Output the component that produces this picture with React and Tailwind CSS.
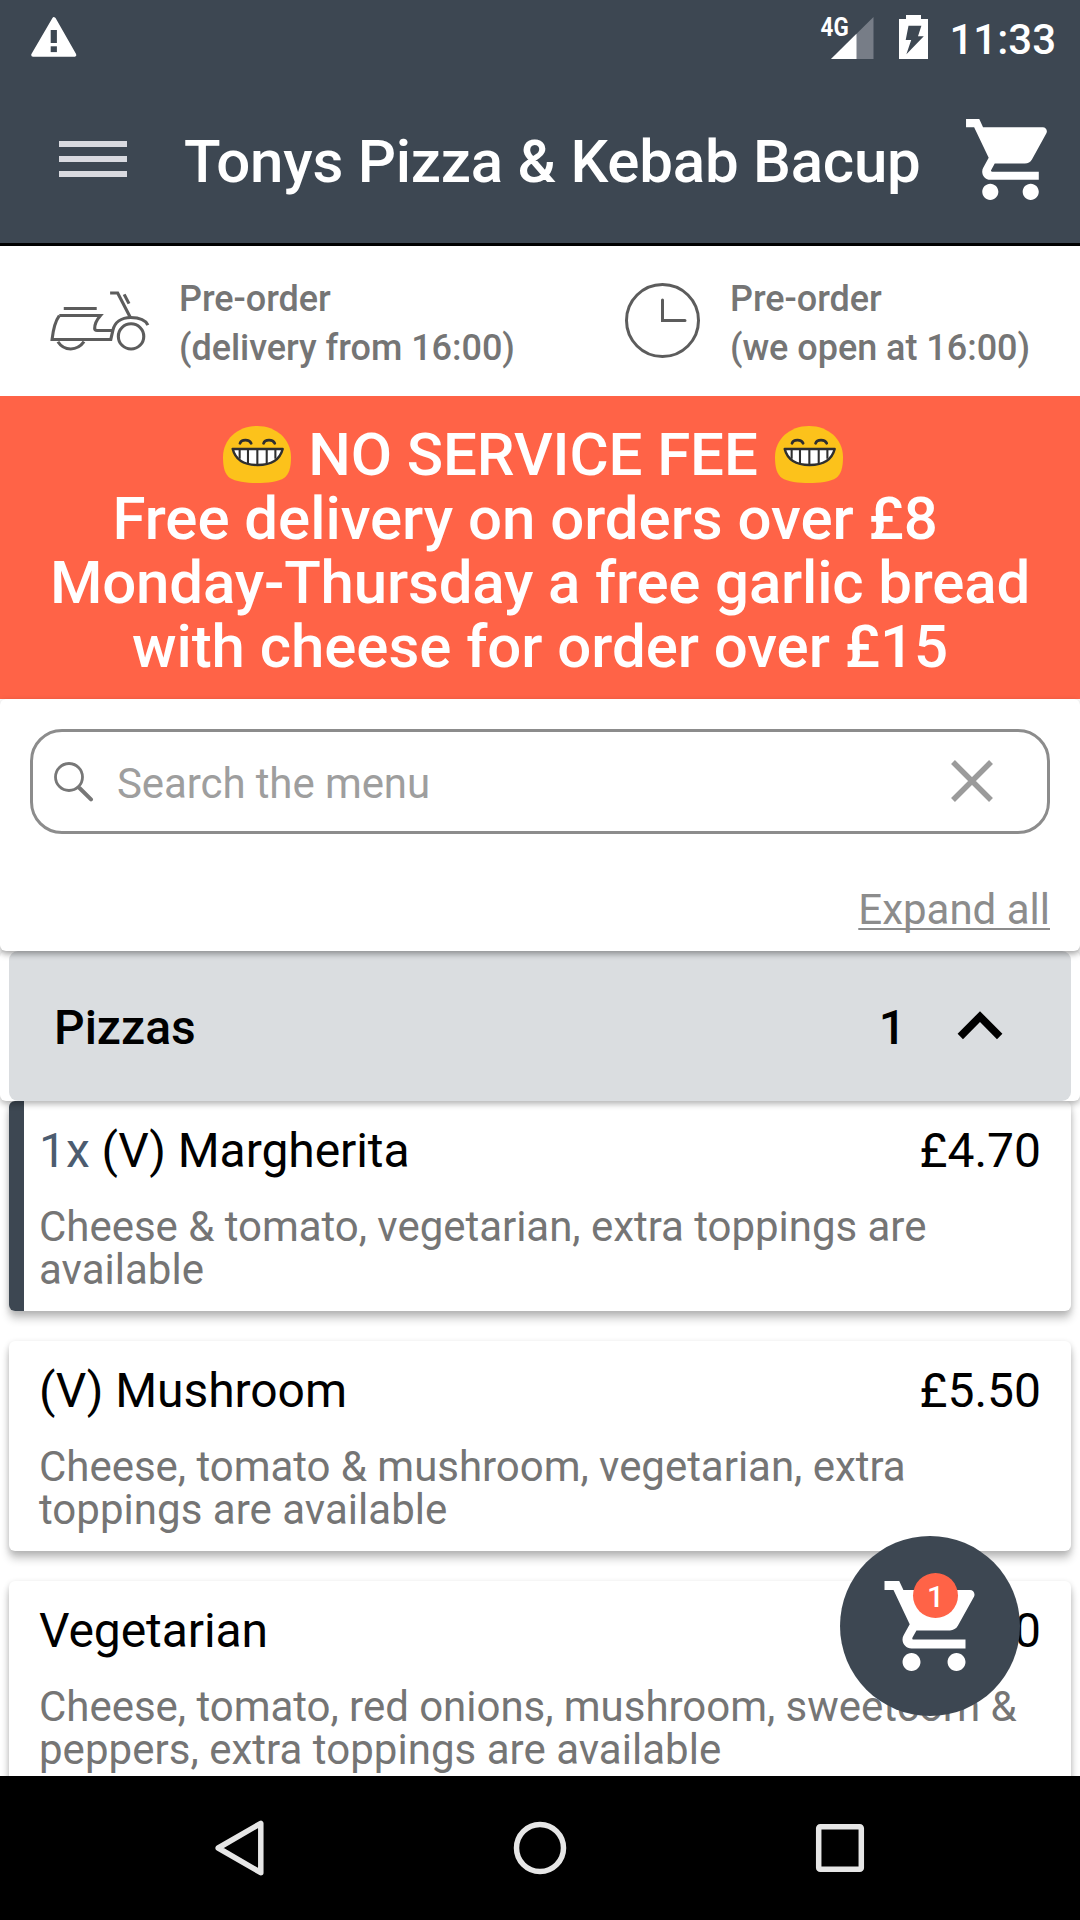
import React from "react";

const CART_PATH =
  "M7 18c-1.1 0-1.99.9-1.99 2S5.9 22 7 22s2-.9 2-2-.9-2-2-2zM1 2v2h2l3.6 7.59-1.35 2.45c-.16.28-.25.61-.25.96 0 1.1.9 2 2 2h12v-2H7.42c-.14 0-.25-.11-.25-.25l.03-.12.9-1.63h7.45c.75 0 1.41-.41 1.75-1.03l3.58-6.49c.08-.14.12-.31.12-.48 0-.55-.45-1-1-1H5.21l-.94-2H1zm16 16c-1.1 0-1.99.9-1.99 2s.89 2 1.99 2 2-.9 2-2-.9-2-2-2z";

function CartIcon({ className }) {
  return (
    <svg viewBox="0 0 24 24" className={className} fill="white">
      <path d={CART_PATH} />
    </svg>
  );
}

function StatusBar() {
  return (
    <div className="flex h-18 items-start justify-between pl-[30px] pr-[24px]">
      <svg className="mt-[16px] h-[42px] w-[48px]" viewBox="0 0 48 42">
        <path d="M24 3 L44.5 39 L3 39 Z" fill="white" stroke="white" strokeWidth="3.6" strokeLinejoin="round" />
        <rect x="20.7" y="14" width="6.2" height="13" fill="#3d4752" />
        <rect x="20.7" y="30.3" width="6.2" height="5.8" fill="#3d4752" />
      </svg>
      <div className="flex items-start text-white">
        <span className="mt-[12px] origin-right scale-x-[0.86] text-[26px] leading-[30px] font-bold">4G</span>
        <svg className="-ml-[17px] mt-[17px] h-[42px] w-[43px]" viewBox="0 0 43 42">
          <path d="M0 42 L42.5 0 V42 Z" fill="#777d87" />
          <path d="M0 42 L25.5 16.8 V42 Z" fill="white" />
        </svg>
        <svg className="ml-[25px] mt-[15px] h-[44px] w-[29px]" viewBox="0 0 29 44">
          <path d="M7 0 H22 V4 H29 V44 H0 V4 H7 Z" fill="white" />
          <path d="M9.5 10.7 H22.4 L19 21.3 H24.8 L7.4 39.3 L12.2 25 H6.7 Z" fill="#3d4752" />
        </svg>
        <span className="ml-[21px] mt-[15px] text-[42px] leading-[49px] font-medium">11:33</span>
      </div>
    </div>
  );
}

function TitleBar() {
  return (
    <div className="flex h-[171px] items-start pl-[59px] pr-[21px] text-white">
      <div className="mt-[69px] flex w-[68px] flex-col gap-[9px]">
        <div className="h-[6px] bg-[#d9dae0]" />
        <div className="h-[6px] bg-[#d9dae0]" />
        <div className="h-[6px] bg-[#d9dae0]" />
      </div>
      <h1 className="mt-[55px] ml-[57px] flex-1 whitespace-nowrap text-[60px] leading-[70px] font-medium tracking-[-0.23px]">
        Tonys Pizza &amp; Kebab Bacup
      </h1>
      <CartIcon className="mt-[39px] h-[97px] w-[97px]" />
    </div>
  );
}

function ScooterIcon() {
  return (
    <svg className="h-[63px] w-[103px]" viewBox="140 145 300 190" preserveAspectRatio="none" fill="none" stroke="#5c5c5c" strokeWidth="9">
      <path d="M183 204 H279" />
      <path d="M170 225 H290 C279 238 273 250 273 264 Q273 270 280 270 H326" />
      <path d="M170 225 C158 242 152 268 149 297 H320 L326 270 C331 246 350 231 378 231 C402 231 421 238 428 254" />
      <path d="M318 157 H340 L377 231" />
      <path d="M359 161 L373 189" />
      <ellipse cx="379" cy="288" rx="37" ry="38" />
      <path d="M166 304 C184 333 222 333 242 304" />
    </svg>
  );
}

function ClockIcon() {
  return (
    <svg className="h-[76px] w-[76px]" viewBox="0 0 76 76" fill="none" stroke="#5c5c5c" strokeWidth="3" strokeLinecap="round">
      <circle cx="38.5" cy="37.5" r="36" />
      <path d="M38.5 17 V37.5 H61" />
    </svg>
  );
}

function PreOrderBar() {
  return (
    <div className="flex h-[150px] bg-white text-[36px] leading-[49px] font-medium tracking-[-0.03px] text-[#757575]">
      <div className="flex w-[540px] pl-[49px]">
        <div className="mt-[42.5px] w-[130px]"><ScooterIcon /></div>
        <div className="mt-[29px] whitespace-nowrap">Pre-order<br />(delivery from 16:00)</div>
      </div>
      <div className="flex w-[540px] pl-[84px]">
        <div className="mt-[37px] w-[106px]"><ClockIcon /></div>
        <div className="mt-[29px] whitespace-nowrap">Pre-order<br />(we open at 16:00)</div>
      </div>
    </div>
  );
}

function GrinFace() {
  return (
    <svg className="h-[57px] w-[68px]" viewBox="648 558 196 171" preserveAspectRatio="none">
      <path d="M746 558 C802 558 844 598 844 651 C844 684 838 703 825 713 C808 725 775 729 746 729 C717 729 684 725 667 713 C654 703 648 684 648 651 C648 598 690 558 746 558 Z" fill="#fcc21b" />
      <path d="M676 627 H820 C812 660 784 675 748 675 C712 675 684 660 676 627 Z" fill="white" stroke="#2f2f2f" strokeWidth="7" strokeLinejoin="round" />
      <path d="M696 629 V656 M720 629 V671 M747 629 V675 M774 629 V671 M799 629 V656" stroke="#2f2f2f" strokeWidth="6" />
      <path d="M697 610 C701 597 724 597 729 610 M765 610 C769 597 792 597 797 610" fill="none" stroke="#2f2f2f" strokeWidth="8" strokeLinecap="round" />
    </svg>
  );
}

function PromoBanner() {
  return (
    <div className="flex h-[303px] flex-col items-center bg-[#ff6347] pt-[27px] text-[60px] leading-[64px] font-medium whitespace-pre text-white">
      <div className="flex h-[64px] pl-[1px]">
        <div className="mt-[3px] mr-[17px]"><GrinFace /></div>
        <span className="tracking-[-0.1px]">NO SERVICE FEE</span>
        <div className="mt-[3px] mr-[15px] ml-[17px]"><GrinFace /></div>
      </div>
      <div className="tracking-[-0.05px]">{"Free delivery on orders over £8  "}</div>
      <div className="tracking-[-0.17px]">Monday-Thursday a free garlic bread</div>
      <div className="tracking-[-0.06px]">with cheese for order over £15</div>
    </div>
  );
}

function SearchPanel() {
  return (
    <div className="relative z-20 h-[252px] rounded-[6px] bg-white px-[30px] pt-[30px] shadow-[0_3px_6px_rgba(0,0,0,0.36)]">
      <div className="flex h-[105px] items-center rounded-[32px] border-3 border-[#8c8c8c] pl-[21px] pr-[54px]">
        <svg className="h-[40px] w-[40px]" viewBox="0 0 40 40" fill="none" stroke="#777" strokeLinecap="round">
          <circle cx="15" cy="15" r="13.5" strokeWidth="2.8" />
          <path d="M25.5 26 L37 37.4" strokeWidth="4" />
        </svg>
        <span className="mt-[3px] ml-[23px] flex-1 text-[42px] leading-[49px] tracking-[-0.1px] text-[#9e9e9e]">Search the menu</span>
        <svg className="-mt-[1px] h-[42px] w-[42px]" viewBox="0 0 42 42" stroke="#9b9b9b" strokeWidth="5.5">
          <path d="M2 2 L40 40 M40 2 L2 40" />
        </svg>
      </div>
      <div className="mt-[51px] flex justify-end">
        <span className="text-[42px] leading-[49px] text-[#8c8c8c] underline decoration-2 underline-offset-[4px] [text-decoration-skip-ink:none]">Expand all</span>
      </div>
    </div>
  );
}

function CategoryHeader() {
  return (
    <div className="relative z-10 h-[150px] rounded-[6px] bg-white px-[9px] shadow-[0_3px_6px_rgba(0,0,0,0.3)]">
      <div className="flex h-full items-center rounded-[9px] bg-[#dadde0] pr-[68px] pl-[45px] text-[48px] leading-[56px] font-medium text-black">
        <span className="mt-[3px] flex-1">Pizzas</span>
        <span className="mt-[3px]">1</span>
        <svg className="ml-[51px] -mt-[2px] h-[30px] w-[46px]" viewBox="0 0 46 30" fill="none" stroke="black" strokeWidth="7.6">
          <path d="M3.3 26.5 L23 6.6 L42.7 26.5" />
        </svg>
      </div>
    </div>
  );
}

function MenuItem({ count, name, price, lines }) {
  return (
    <div className="h-[210px] shrink-0 rounded-[6px] bg-white shadow-[0_8px_8px_rgba(0,0,0,0.2),0_2px_6px_rgba(0,0,0,0.16)]">
      <div className={count ? "h-full rounded-[6px] border-l-[15px] border-[#3d4752] pt-[22px] pr-[30px] pl-[15px]" : "h-full pt-[22px] pr-[30px] pl-[30px]"}>
        <div className="flex justify-between text-[48px] leading-[56px] text-black">
          <span className="tracking-[-0.07px]">
            {count && <span className="text-[#4c5c70]">{count} </span>}
            {name}
          </span>
          <span>{price}</span>
        </div>
        <p className="mt-[26px] text-[42px] leading-[43px] whitespace-nowrap text-[#757575]">
          <span className="tracking-[-0.03px]">{lines[0]}</span>
          <br />
          <span className="tracking-[0.03px]">{lines[1]}</span>
        </p>
      </div>
    </div>
  );
}

const ITEMS = [
  { count: "1x", name: "(V) Margherita", price: "£4.70", lines: ["Cheese & tomato, vegetarian, extra toppings are", "available"] },
  { name: "(V) Mushroom", price: "£5.50", lines: ["Cheese, tomato & mushroom, vegetarian, extra", "toppings are available"] },
  { name: "Vegetarian", price: "£5.50", lines: ["Cheese, tomato, red onions, mushroom, sweetcorn &", "peppers, extra toppings are available"] },
];

function CartButton() {
  return (
    <button className="absolute right-[60px] bottom-[60px] z-30 h-[180px] w-[180px] rounded-full bg-[#3d4752]">
      <CartIcon className="absolute top-[36px] left-[40px] h-[108px] w-[108px]" />
      <span className="absolute top-[37px] left-[73px] flex h-[45px] w-[45px] items-center justify-center rounded-full bg-[#ff6347] pt-[1px] text-[30px] leading-[35px] font-medium text-white">
        1
      </span>
    </button>
  );
}

function NavBar() {
  return (
    <div className="flex h-[144px] items-center justify-between bg-black pr-[213px] pl-[213px]">
      <svg className="h-[60px] w-[54px]" viewBox="0 0 54 60" fill="none" stroke="#e6e6e6" strokeWidth="5.5" strokeLinejoin="round">
        <path d="M5.2 30 L47.8 5.3 V54.7 Z" />
      </svg>
      <svg className="h-[54px] w-[54px]" viewBox="0 0 54 54" fill="none" stroke="#e6e6e6" strokeWidth="5.5">
        <circle cx="27" cy="27" r="23.5" />
      </svg>
      <svg className="h-[54px] w-[54px]" viewBox="0 0 54 54" fill="none" stroke="#e6e6e6" strokeWidth="5.5">
        <rect x="5.7" y="5.7" width="42.6" height="42.6" rx="1.5" />
      </svg>
    </div>
  );
}

export default function App() {
  return (
    <div className="flex h-[1920px] w-[1080px] flex-col overflow-hidden bg-white font-['Roboto',sans-serif]">
      <header className="h-[246px] shrink-0 border-b-3 border-black bg-[#3d4752]">
        <StatusBar />
        <TitleBar />
      </header>
      <main className="relative h-[1530px] shrink-0 overflow-hidden">
        <PreOrderBar />
        <PromoBanner />
        <SearchPanel />
        <CategoryHeader />
        <div className="flex flex-col gap-[30px] px-[9px]">
          {ITEMS.map((item) => (
            <MenuItem key={item.name} {...item} />
          ))}
        </div>
        <CartButton />
      </main>
      <NavBar />
    </div>
  );
}
